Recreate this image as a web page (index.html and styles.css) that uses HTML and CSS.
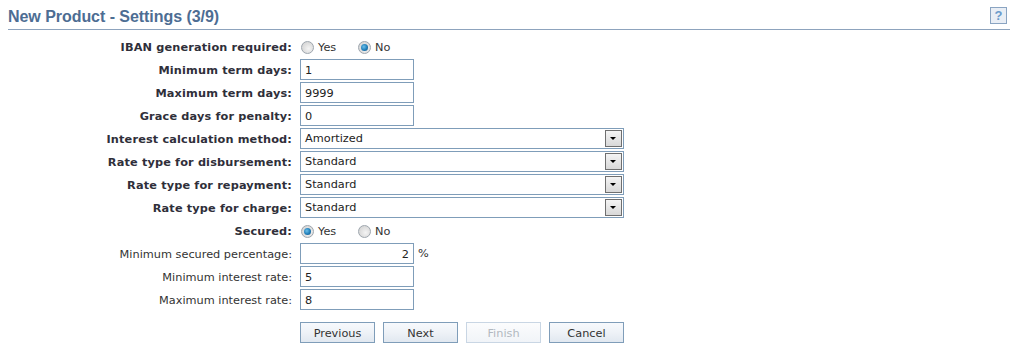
FILE: index.html
```html
<!DOCTYPE html>
<html>
<head>
<meta charset="utf-8">
<link rel="stylesheet" href="styles.css">
</head>
<body>
<div class="page">
  <div class="header">
    <h1 class="title">New Product - Settings (3/9)</h1>
    <span class="help">?</span>
  </div>
  <div class="form">
    <label class="lbl b">IBAN generation required:</label>
    <div class="field radios">
      <span class="opt"><span class="radio"></span>Yes</span>
      <span class="opt"><span class="radio on"></span>No</span>
    </div>

    <label class="lbl b">Minimum term days:</label>
    <div class="field"><span class="input">1</span></div>

    <label class="lbl b">Maximum term days:</label>
    <div class="field"><span class="input">9999</span></div>

    <label class="lbl b">Grace days for penalty:</label>
    <div class="field"><span class="input">0</span></div>

    <label class="lbl b">Interest calculation method:</label>
    <div class="field"><span class="select">Amortized<span class="arrow"></span></span></div>

    <label class="lbl b">Rate type for disbursement:</label>
    <div class="field"><span class="select">Standard<span class="arrow"></span></span></div>

    <label class="lbl b">Rate type for repayment:</label>
    <div class="field"><span class="select">Standard<span class="arrow"></span></span></div>

    <label class="lbl b">Rate type for charge:</label>
    <div class="field"><span class="select">Standard<span class="arrow"></span></span></div>

    <label class="lbl b">Secured:</label>
    <div class="field radios">
      <span class="opt"><span class="radio on"></span>Yes</span>
      <span class="opt"><span class="radio"></span>No</span>
    </div>

    <label class="lbl">Minimum secured percentage:</label>
    <div class="field"><span class="input right">2</span><span class="unit">%</span></div>

    <label class="lbl">Minimum interest rate:</label>
    <div class="field"><span class="input">5</span></div>

    <label class="lbl">Maximum interest rate:</label>
    <div class="field"><span class="input">8</span></div>

    <div class="spacer"></div>
    <div class="buttons">
      <span class="btn">Previous</span>
      <span class="btn">Next</span>
      <span class="btn disabled">Finish</span>
      <span class="btn">Cancel</span>
    </div>
  </div>
</div>
</body>
</html>
```

FILE: styles.css
```css
html, body {
  margin: 0;
  padding: 0;
  background: #ffffff;
}
body {
  font-family: "DejaVu Sans", Verdana, sans-serif;
  font-size: 11.3px;
  color: #333333;
}
.page {
  padding: 7px 3px 0 8px;
}
.header {
  display: flex;
  justify-content: space-between;
  align-items: flex-start;
  border-bottom: 1px solid #8da3bd;
  height: 22px;
}
.title {
  margin: 0;
  font-family: "Liberation Sans", Arial, sans-serif;
  font-size: 16px;
  font-weight: bold;
  color: #4d6d93;
  line-height: 20px;
  letter-spacing: -0.05px;
}
.help {
  width: 15px;
  height: 15px;
  border: 1px solid #8aa4c2;
  background: #e9eef5;
  color: #6b9acb;
  font-family: "Liberation Sans", Arial, sans-serif;
  font-weight: bold;
  font-size: 13px;
  line-height: 15px;
  text-align: center;
  margin-right: 3px;
}
.form {
  display: grid;
  grid-template-columns: 284px 1fr;
  column-gap: 8px;
  row-gap: 2px;
  margin-top: 6px;
}
.lbl {
  text-align: right;
  height: 21px;
  line-height: 23px;
  white-space: nowrap;
  color: #333333;
}
.lbl.b {
  font-weight: bold;
  color: #2f2f3a;
  letter-spacing: 0.15px;
}
.field {
  display: flex;
  align-items: center;
  height: 21px;
}
.opt {
  display: inline-flex;
  align-items: center;
  width: 57px;
  color: #333;
  padding-top: 1px;
}
.radio {
  width: 11px;
  height: 11px;
  border: 1px solid #9ea6ae;
  border-radius: 50%;
  background: radial-gradient(circle at 60% 60%, #f4f4f4 0%, #dcdcdc 60%, #cfcfcf 100%);
  margin: 0 4px 0 1px;
  position: relative;
  box-sizing: content-box;
}
.radio.on::after {
  content: "";
  position: absolute;
  left: 2px;
  top: 2px;
  width: 7px;
  height: 7px;
  border-radius: 50%;
  background: radial-gradient(circle at 40% 40%, #6cc0ea 0%, #1f7db8 55%, #0f4f7d 100%);
}
.input {
  box-sizing: border-box;
  width: 114px;
  height: 21px;
  border: 1px solid #7f9db9;
  padding: 1px 4px 0;
  line-height: 19px;
  color: #222;
}
.input.right {
  text-align: right;
}
.unit {
  margin-left: 4px;
  color: #333;
}
.select {
  box-sizing: border-box;
  width: 324px;
  height: 21px;
  border: 1px solid #7f9db9;
  padding: 0 4px;
  line-height: 19px;
  color: #222;
  display: flex;
  justify-content: space-between;
  align-items: center;
}
.arrow {
  box-sizing: border-box;
  width: 17px;
  height: 17px;
  border: 1px solid #6f6f6f;
  background: linear-gradient(#f4f4f4, #d8d8d8);
  margin-right: -3px;
  position: relative;
}
.arrow::after {
  content: "";
  position: absolute;
  left: 4px;
  top: 6px;
  border-left: 3px solid transparent;
  border-right: 3px solid transparent;
  border-top: 3px solid #000;
}
.spacer {
  height: 21px;
  margin-top: 10px;
}
.buttons {
  display: flex;
  gap: 8px;
  margin-top: 10px;
}
.btn {
  box-sizing: border-box;
  width: 75px;
  height: 21px;
  border: 1px solid #7f9db9;
  background: linear-gradient(#f7f9fc 0%, #eef2f7 50%, #e1e8f0 100%);
  text-align: center;
  line-height: 20px;
  padding-top: 1px;
  color: #333;
}
.btn.disabled {
  border-color: #c9d6e4;
  background: linear-gradient(#fbfcfd, #f1f4f8);
  color: #b2b8c0;
}
```
